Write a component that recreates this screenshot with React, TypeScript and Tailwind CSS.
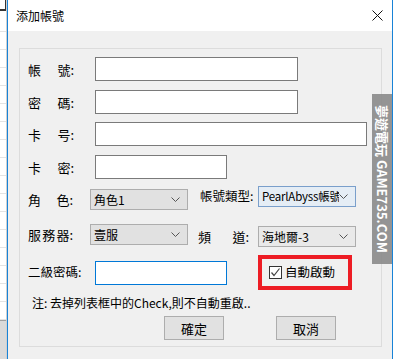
import React from "react";

const font = { fontFamily: '"Noto Sans CJK TC", "Noto Sans", sans-serif' };

function Chevron() {
  return (
    <svg width="9" height="6" viewBox="0 0 9 6" className="shrink-0">
      <polyline points="0.5,0.5 4.5,4.5 8.5,0.5" fill="none" stroke="#555" strokeWidth="1" />
    </svg>
  );
}

function Select({
  text,
  hover,
  className,
  textClass,
}: {
  text: string;
  hover?: boolean;
  className?: string;
  textClass?: string;
}) {
  return (
    <div
      className={`flex h-[21px] w-[98px] items-center border pl-[3px] pr-[7px] text-black ${
        hover ? "border-[#7a9fcb] bg-[#e5edf5]" : "border-[#adadad] bg-[#e1e1e1]"
      } ${className ?? ""}`}
    >
      <span className={`min-w-0 flex-1 overflow-hidden whitespace-nowrap leading-[17px] ${textClass ?? "text-[12px]"}`}>
        {text}
      </span>
      <Chevron />
    </div>
  );
}

function Spaced({ parts, width }: { parts: string[]; width: string }) {
  return (
    <div className={`flex justify-between text-[13px] leading-none ${width}`}>
      {parts.map((p) => (
        <span key={p}>{p}</span>
      ))}
    </div>
  );
}

export default function App() {
  const stripRows = Array.from({ length: 16 });
  return (
    <div className="flex h-[359px] w-[393px] overflow-hidden bg-white text-black" style={font}>
      {/* background window edge */}
      <div className="flex w-[7px] flex-col overflow-hidden border-r border-[#d0d0d0] bg-white">
        <div className="h-[32px] shrink-0 border-b border-[#e3e3e3]">
          <div className="-ml-[5px] h-[11px] w-[12px] border-b-2 border-r-2 border-[#333]" />
        </div>
        {stripRows.map((_, i) => (
          <div key={i} className="h-[18px] shrink-0 border-b border-[#e3e3e3]" />
        ))}
        <div className="flex-1 border-t border-[#a0a0a0] bg-[#dadada]" />
      </div>

      {/* dialog */}
      <div className="relative flex flex-1 flex-col border-x border-[#1883d7]">
        <div className="flex h-[31px] items-center justify-between bg-white pl-[8px] pr-[9px]">
          <span className="text-[12px] leading-none">添加帳號</span>
          <svg width="11" height="11" viewBox="0 0 11 11">
            <path d="M0.5 0.5 L10.5 10.5 M10.5 0.5 L0.5 10.5" stroke="#111" strokeWidth="1" />
          </svg>
        </div>

        <div className="flex-1 bg-[#f0f0f0] pl-[11px] pr-[10px] pt-[17px]">
          <div className="flex h-[299px] flex-col border border-[#dcdcdc]">
            {/* 帳號 */}
            <div className="mt-[8px] flex h-[24px] items-center pl-[8px]">
              <div className="w-[67px]">
                <Spaced parts={["帳", "號:"]} width="w-[46px]" />
              </div>
              <div className="h-[24px] w-[203px] border border-[#7a7a7a] bg-white" />
            </div>
            {/* 密碼 */}
            <div className="mt-[9px] flex h-[24px] items-center pl-[8px]">
              <div className="w-[67px]">
                <Spaced parts={["密", "碼:"]} width="w-[46px]" />
              </div>
              <div className="h-[24px] w-[203px] border border-[#7a7a7a] bg-white" />
            </div>
            {/* 卡号 */}
            <div className="mt-[8px] flex h-[24px] items-center pl-[8px]">
              <div className="w-[67px]">
                <Spaced parts={["卡", "号:"]} width="w-[46px]" />
              </div>
              <div className="h-[24px] w-[272px] border border-[#7a7a7a] bg-white" />
            </div>
            {/* 卡密 */}
            <div className="mt-[9px] flex h-[24px] items-center pl-[8px]">
              <div className="w-[67px]">
                <Spaced parts={["卡", "密:"]} width="w-[46px]" />
              </div>
              <div className="h-[24px] w-[132px] border border-[#7a7a7a] bg-white" />
            </div>
            {/* 角色 / 帳號類型 */}
            <div className="mt-[7px] flex h-[24px] items-start pl-[8px]">
              <div className="mt-[3px] flex h-[21px] w-[62px] items-center">
                <Spaced parts={["角", "色:"]} width="w-[45px]" />
              </div>
              <Select text="角色1" className="mt-[3px]" />
              <div className="ml-[12px] flex h-[21px] w-[58px] items-center text-[12.5px] leading-none">帳號類型:</div>
              <Select text="PearlAbyss帳號" hover textClass="text-[11.5px] tracking-[-0.2px]" />
            </div>
            {/* 服務器 / 頻道 */}
            <div className="mt-[14px] flex h-[23px] items-start pl-[8px]">
              <div className="flex h-[21px] w-[62px] items-center">
                <Spaced parts={["服", "務", "器:"]} width="w-[45px]" />
              </div>
              <Select text="壹服" />
              <div className="ml-[10px] mt-[2px] flex h-[21px] w-[60px] items-center">
                <Spaced parts={["頻", "道:"]} width="w-[51px]" />
              </div>
              <Select text="海地爾-3" className="mt-[2px] bg-[#e9e9e9]" />
            </div>
            {/* 二級密碼 / 自動啟動 */}
            <div className="mt-[8px] flex h-[35px] items-center pl-[8px]">
              <div className="w-[67px] text-[12.5px] leading-none">二級密碼:</div>
              <div className="h-[24px] w-[132px] border border-[#0078d7] bg-white" />
              <div className="ml-[31px] flex h-[35px] w-[94px] items-center border-4 border-[#ed1c24] pl-[7px]">
                <div className="flex h-[13px] w-[13px] items-center justify-center border border-[#333] bg-white">
                  <svg width="11" height="11" viewBox="0 0 11 11">
                    <polyline points="1.5,5.5 4,8.5 9.5,1.5" fill="none" stroke="#444" strokeWidth="1.2" />
                  </svg>
                </div>
                <span className="ml-[3px] text-[12.5px] leading-none">自動啟動</span>
              </div>
            </div>
            {/* note */}
            <div className="mt-[6px] pl-[12px] text-[12px] leading-[14px] whitespace-nowrap">
              注: 去掉列表框中的Check,則不自動重啟..
            </div>
            {/* buttons */}
            <div className="mt-[6px] flex pl-[144px]">
              <div className="flex h-[24px] w-[60px] items-center justify-center border border-[#adadad] bg-[#e1e1e1] text-[13px] leading-none">
                確定
              </div>
              <div className="ml-[52px] flex h-[24px] w-[60px] items-center justify-center border border-[#adadad] bg-[#e1e1e1] text-[13px] leading-none">
                取消
              </div>
            </div>
          </div>
        </div>

        {/* watermark */}
        <div className="absolute right-0 top-[94px] flex h-[170px] w-[20px] items-center justify-center bg-[#8a8a8a]/90">
          <span
            className="whitespace-nowrap text-[13px] font-bold leading-none text-white [writing-mode:vertical-rl] [text-orientation:sideways]"
            style={{ fontFamily: '"Noto Sans CJK TC", "Liberation Sans", sans-serif' }}
          >
            夢遊電玩 GAME735.COM
          </span>
        </div>
      </div>
    </div>
  );
}
